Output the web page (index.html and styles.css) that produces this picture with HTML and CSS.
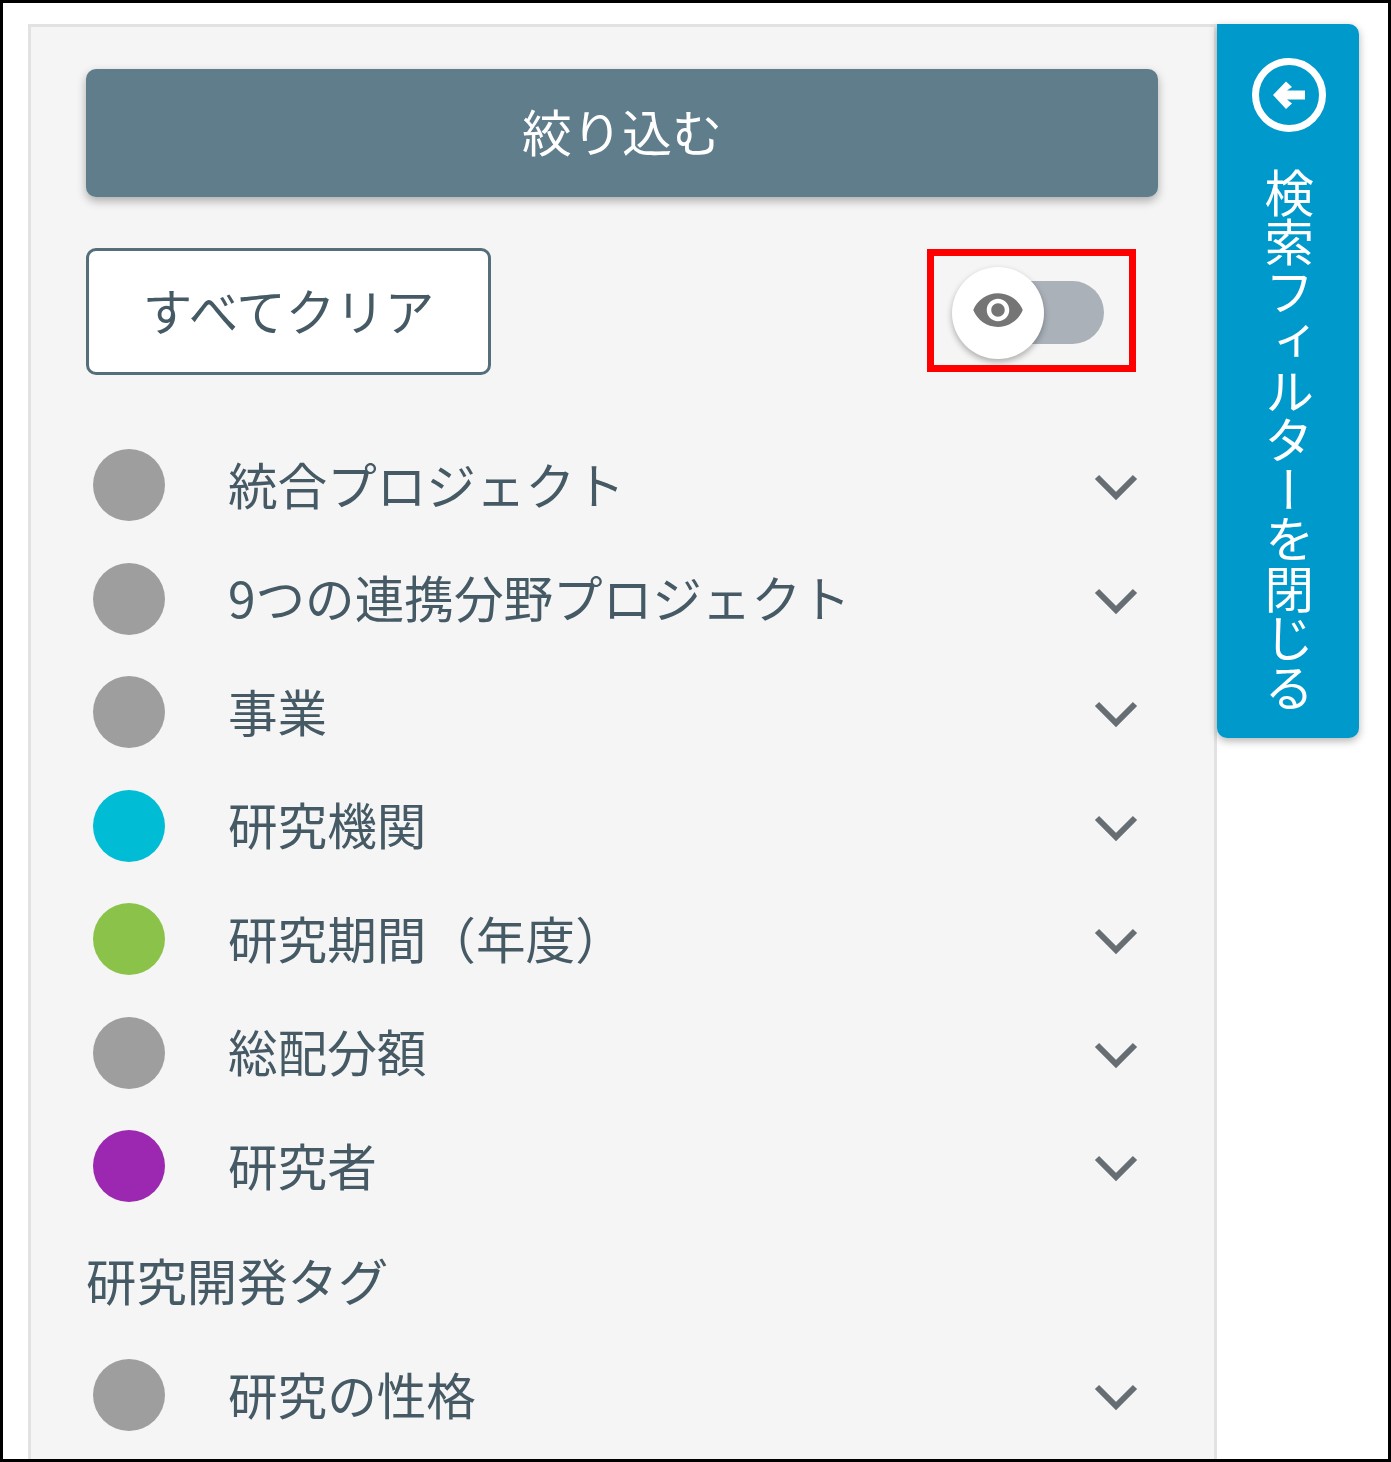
FILE: index.html
```html
<!DOCTYPE html>
<html lang="ja">
<head>
    <meta charset="UTF-8">
    <meta name="viewport" content="width=device-width, initial-scale=1.0">
    <title>検索フィルター</title>
    <link rel="stylesheet" href="styles.css">
</head>
<body>
    <div class="frame">
        <div class="panel">
            <button class="btn-apply">絞り込む</button>

            <div class="tools">
                <button class="btn-clear">すべてクリア</button>
                <div class="toggle">
                    <div class="toggle-track"></div>
                    <div class="toggle-thumb">
                        <svg class="eye" viewBox="0 0 24 24"><path d="M12 4.5C7 4.5 2.73 7.61 1 12c1.73 4.39 6 7.5 11 7.5s9.27-3.11 11-7.5c-1.73-4.39-6-7.5-11-7.5zM12 17c-2.76 0-5-2.24-5-5s2.24-5 5-5 5 2.24 5 5-2.24 5-5 5zm0-8c-1.66 0-3 1.34-3 3s1.34 3 3 3 3-1.34 3-3-1.34-3-3-3z"/></svg>
                    </div>
                    <div class="highlight"></div>
                </div>
            </div>

            <div class="filter-row">
                <span class="dot"></span>
                <span class="filter-name">統合プロジェクト</span>
                <svg class="chevron" viewBox="0 0 44 30"><polyline points="3,4 22,23 41,4"/></svg>
            </div>
            <div class="filter-row">
                <span class="dot"></span>
                <span class="filter-name">9つの連携分野プロジェクト</span>
                <svg class="chevron" viewBox="0 0 44 30"><polyline points="3,4 22,23 41,4"/></svg>
            </div>
            <div class="filter-row">
                <span class="dot"></span>
                <span class="filter-name">事業</span>
                <svg class="chevron" viewBox="0 0 44 30"><polyline points="3,4 22,23 41,4"/></svg>
            </div>
            <div class="filter-row">
                <span class="dot dot-cyan"></span>
                <span class="filter-name">研究機関</span>
                <svg class="chevron" viewBox="0 0 44 30"><polyline points="3,4 22,23 41,4"/></svg>
            </div>
            <div class="filter-row">
                <span class="dot dot-green"></span>
                <span class="filter-name">研究期間（年度）</span>
                <svg class="chevron" viewBox="0 0 44 30"><polyline points="3,4 22,23 41,4"/></svg>
            </div>
            <div class="filter-row">
                <span class="dot"></span>
                <span class="filter-name">総配分額</span>
                <svg class="chevron" viewBox="0 0 44 30"><polyline points="3,4 22,23 41,4"/></svg>
            </div>
            <div class="filter-row">
                <span class="dot dot-purple"></span>
                <span class="filter-name">研究者</span>
                <svg class="chevron" viewBox="0 0 44 30"><polyline points="3,4 22,23 41,4"/></svg>
            </div>

            <div class="section-title">研究開発タグ</div>

            <div class="filter-row">
                <span class="dot"></span>
                <span class="filter-name">研究の性格</span>
                <svg class="chevron" viewBox="0 0 44 30"><polyline points="3,4 22,23 41,4"/></svg>
            </div>
        </div>

        <div class="side-tab">
            <svg class="back-icon" viewBox="0 0 76 76">
                <circle cx="38" cy="38" r="33.5"/>
                <path d="M22 38 L35 24.5 L41 30 L36 33.5 L54 33.5 L54 42.5 L36 42.5 L41 46.5 L35 52 Z"/>
            </svg>
            <span class="side-label">検索フィルターを閉じる</span>
        </div>
    </div>
</body>
</html>
```

FILE: styles.css
```css
* {
    box-sizing: border-box;
    margin: 0;
    padding: 0;
}

body {
    font-family: "Noto Sans CJK JP", "Noto Sans", sans-serif;
    background-color: white;
    color: #455a64;
}

.frame {
    width: 1391px;
    height: 1462px;
    border: 3px solid black;
    padding: 21px 0 0 25px;
    display: flex;
    align-items: flex-start;
    overflow: hidden;
}

.panel {
    width: 1189px;
    height: 1500px;
    flex-shrink: 0;
    background-color: #f5f5f5;
    border: 3px solid #e2e2e2;
    padding: 42px 56px 0 55px;
}

.btn-apply {
    display: block;
    width: 100%;
    height: 128px;
    padding-bottom: 7px;
    border: none;
    border-radius: 10px;
    background-color: #607d8b;
    color: white;
    font-family: inherit;
    font-size: 50px;
    box-shadow: 0 4px 10px rgba(0, 0, 0, 0.3);
}

.tools {
    display: flex;
    align-items: center;
    justify-content: space-between;
    margin-top: 51px;
    margin-bottom: 53.5px;
}

.btn-clear {
    width: 405px;
    height: 127px;
    padding-bottom: 4px;
    border: 3px solid #546e7a;
    border-radius: 10px;
    background-color: white;
    color: #455a64;
    font-family: inherit;
    font-size: 49.5px;
}

.toggle {
    position: relative;
    width: 152px;
    height: 92px;
    margin-right: 54px;
    margin-top: 2px;
}

.toggle-track {
    position: absolute;
    left: 13px;
    top: 14px;
    width: 139px;
    height: 63px;
    border-radius: 32px;
    background-color: #aab1b9;
}

.toggle-thumb {
    position: absolute;
    left: 0;
    top: 0;
    width: 92px;
    height: 92px;
    border-radius: 50%;
    background-color: white;
    box-shadow: 0 3px 6px rgba(0, 0, 0, 0.3);
    display: flex;
    align-items: center;
    justify-content: center;
}

.eye {
    width: 54px;
    height: 54px;
    fill: #757575;
    margin-bottom: 6px;
}

/* red annotation box */
.highlight {
    position: absolute;
    left: -25px;
    top: -18px;
    width: 209px;
    height: 123px;
    border: 7px solid #ff0000;
}

.filter-row {
    display: flex;
    align-items: center;
    height: 113.5px;
    padding-left: 7px;
    padding-right: 20px;
}

.dot {
    width: 72px;
    height: 72px;
    flex-shrink: 0;
    border-radius: 50%;
    background-color: #9e9e9e;
}

.dot-cyan {
    background-color: #00bcd4;
}

.dot-green {
    background-color: #8bc34a;
}

.dot-purple {
    background-color: #9c27b0;
}

.filter-name {
    flex: 1;
    margin-left: 63px;
    margin-bottom: 3px;
    font-size: 49.6px;
    line-height: 1;
}

.chevron {
    width: 44px;
    height: 30px;
    margin-top: 6px;
    fill: none;
    stroke: #666e73;
    stroke-width: 6;
}

.section-title {
    height: 115.5px;
    font-size: 50.4px;
    line-height: 113px;
}

.side-tab {
    width: 142px;
    height: 714px;
    flex-shrink: 0;
    background-color: #0099cc;
    border-radius: 0 10px 10px 10px;
    box-shadow: 0 3px 8px rgba(0, 0, 0, 0.3);
    color: white;
    display: flex;
    flex-direction: column;
    align-items: center;
    padding-top: 33px;
    padding-left: 2px;
}

.back-icon {
    width: 76px;
    height: 76px;
    fill: white;
}

.back-icon circle {
    fill: none;
    stroke: white;
    stroke-width: 7;
}

.side-label {
    writing-mode: vertical-rl;
    margin-top: 35px;
    font-size: 49.5px;
    line-height: 1;
}
```
